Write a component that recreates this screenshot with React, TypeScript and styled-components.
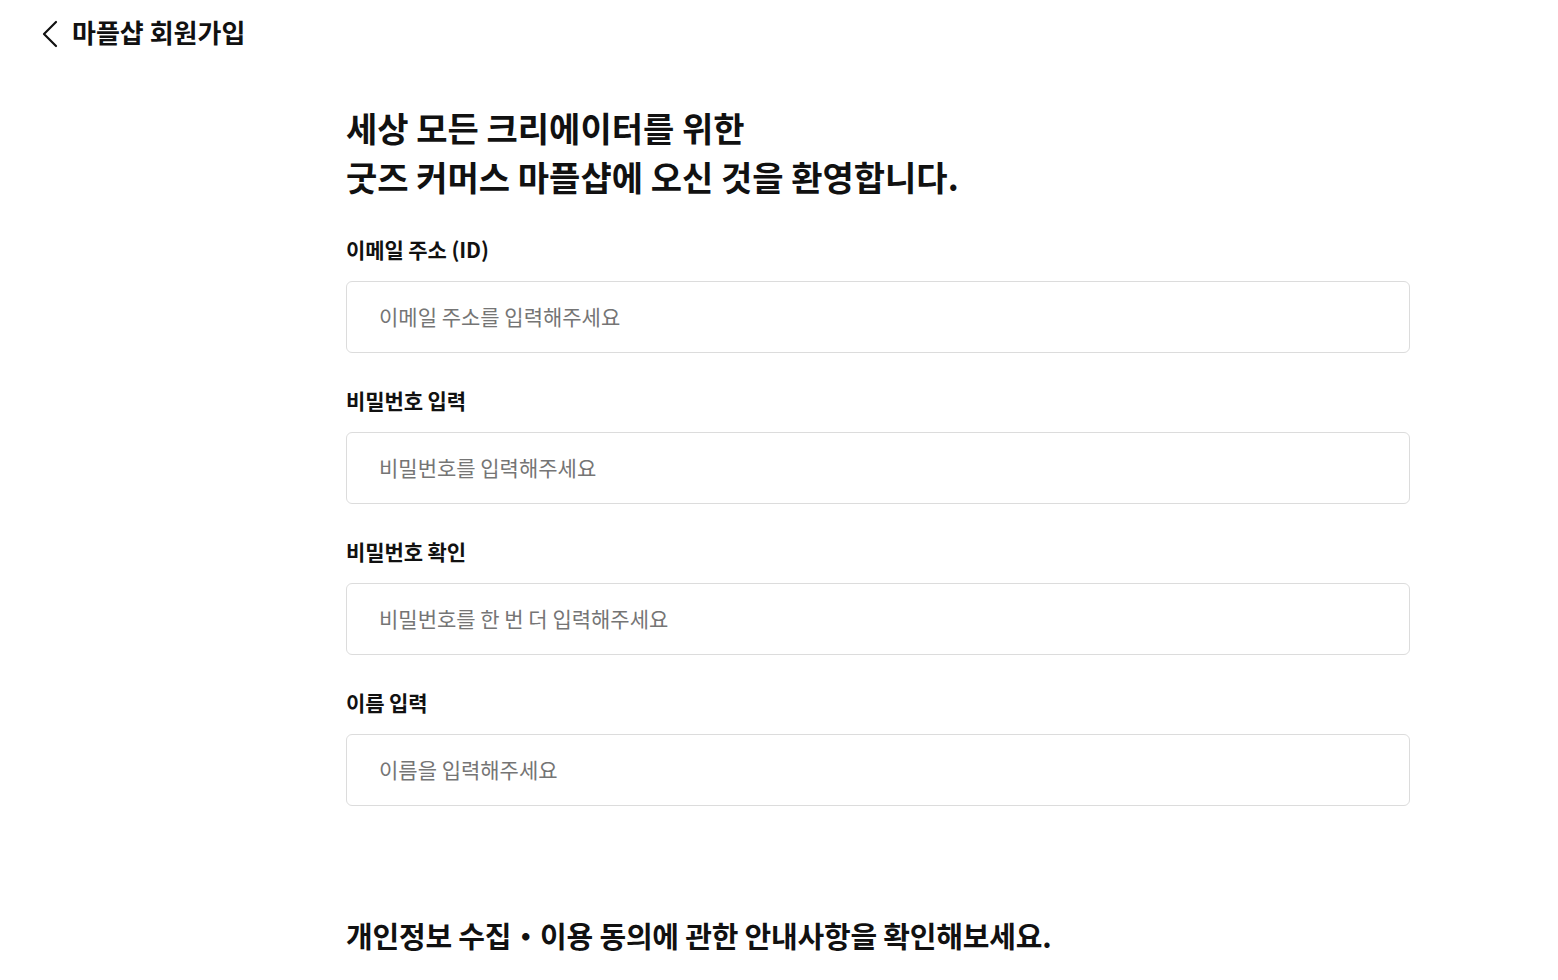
import styled, { createGlobalStyle } from 'styled-components'

const GlobalStyle = createGlobalStyle`
    body {
        margin: 0;
        background: #fff;
        color: #111;
        font-family: 'Noto Sans CJK KR', 'Noto Sans', sans-serif;
    }
`

const fields = [
    { label: '이메일 주소 (ID)', placeholder: '이메일 주소를 입력해주세요', type: 'email' },
    { label: '비밀번호 입력', placeholder: '비밀번호를 입력해주세요', type: 'password' },
    { label: '비밀번호 확인', placeholder: '비밀번호를 한 번 더 입력해주세요', type: 'password' },
    { label: '이름 입력', placeholder: '이름을 입력해주세요', type: 'text' },
]

const App = () => {
    return (
        <>
            <GlobalStyle />
            <Header>
                <BackButton aria-label="뒤로가기">
                    <svg width="20" height="28" viewBox="0 0 20 28" fill="none">
                        <path
                            d="M16 2 L4 14 L16 26"
                            stroke="#111"
                            strokeWidth="2.2"
                            strokeLinecap="round"
                            strokeLinejoin="round"
                        />
                    </svg>
                </BackButton>
                <Title>마플샵 회원가입</Title>
            </Header>

            <Main>
                <Welcome>
                    세상 모든 크리에이터를 위한
                    <br />
                    굿즈 커머스 마플샵에 오신 것을 환영합니다.
                </Welcome>

                <Form>
                    {fields.map((f) => (
                        <Field key={f.label}>
                            <Label>{f.label}</Label>
                            <Input type={f.type} placeholder={f.placeholder} />
                        </Field>
                    ))}
                </Form>

                <Notice>개인정보 수집・이용 동의에 관한 안내사항을 확인해보세요.</Notice>
            </Main>
        </>
    )
}

const Header = styled.header`
    display: flex;
    align-items: center;
    gap: 12px;
    height: 68px;
    padding-left: 40px;
`

const BackButton = styled.button`
    display: flex;
    align-items: center;
    justify-content: center;
    padding: 0;
    border: 0;
    background: none;
    cursor: pointer;
`

const Title = styled.h1`
    margin: 0 0 4px;
    font-size: 26px;
    line-height: 34px;
    font-weight: 700;
    letter-spacing: 0;
    color: #111;
`

const Main = styled.main`
    width: 1064px;
    padding-left: 346px;
`

const Welcome = styled.h2`
    margin: 35px 0 0;
    font-size: 34px;
    line-height: 49px;
    font-weight: 700;
    letter-spacing: 0;
    color: #111;
`

const Form = styled.form`
    display: flex;
    flex-direction: column;
    gap: 33px;
    margin-top: 34px;
`

const Field = styled.div`
    display: flex;
    flex-direction: column;
    gap: 18px;
`

const Label = styled.label`
    font-size: 21px;
    line-height: 28px;
    font-weight: 600;
    letter-spacing: -0.1px;
    color: #111;
`

const Input = styled.input`
    box-sizing: border-box;
    width: 100%;
    height: 72px;
    padding: 0 32px 2px;
    border: 1px solid #dcdcdc;
    border-radius: 6px;
    font-family: inherit;
    font-size: 21px;
    letter-spacing: 0;
    color: #111;
    outline: none;

    ::placeholder {
        color: #b0b0b0;
    }

    &:focus {
        border-color: #111;
    }
`

const Notice = styled.h3`
    margin: 109px 0 0;
    font-size: 29px;
    line-height: 40px;
    font-weight: 700;
    letter-spacing: -0.2px;
    color: #111;
`

export default App
